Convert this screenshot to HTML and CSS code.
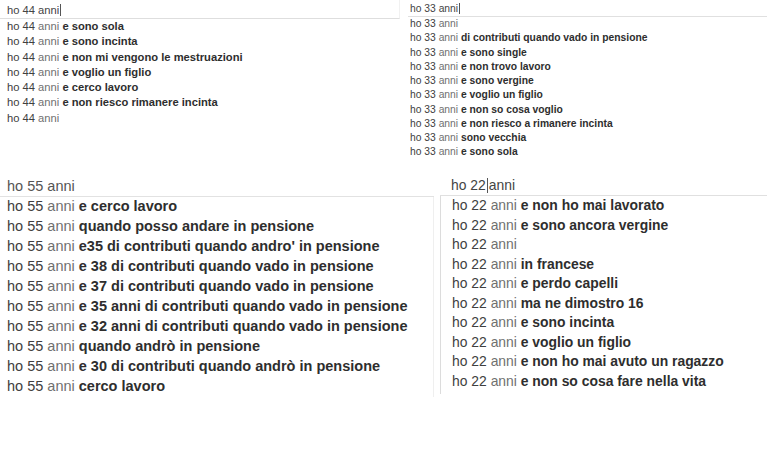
FILE: index.html
```html
<!DOCTYPE html>
<html lang="it">
<head>
<meta charset="utf-8">
<title>ho ... anni</title>
<link rel="stylesheet" href="styles.css">
</head>
<body>
<div class="page">
  <div class="row row-top">
    <section class="panel p1">
      <div class="input">ho 44 anni<span class="caret"></span></div>
      <ul class="list">
        <li><span class="q">ho 44 </span><span class="a">anni</span> <b>e sono sola</b></li>
        <li><span class="q">ho 44 </span><span class="a">anni</span> <b>e sono incinta</b></li>
        <li><span class="q">ho 44 </span><span class="a">anni</span> <b>e non mi vengono le mestruazioni</b></li>
        <li><span class="q">ho 44 </span><span class="a">anni</span> <b>e voglio un figlio</b></li>
        <li><span class="q">ho 44 </span><span class="a">anni</span> <b>e cerco lavoro</b></li>
        <li><span class="q">ho 44 </span><span class="a">anni</span> <b>e non riesco rimanere incinta</b></li>
        <li><span class="q">ho 44 </span><span class="a">anni</span></li>
      </ul>
    </section>
    <section class="panel p2">
      <div class="input">ho 33 anni<span class="caret"></span></div>
      <ul class="list">
        <li><span class="q">ho 33 </span><span class="a">anni</span></li>
        <li><span class="q">ho 33 </span><span class="a">anni</span> <b>di contributi quando vado in pensione</b></li>
        <li><span class="q">ho 33 </span><span class="a">anni</span> <b>e sono single</b></li>
        <li><span class="q">ho 33 </span><span class="a">anni</span> <b>e non trovo lavoro</b></li>
        <li><span class="q">ho 33 </span><span class="a">anni</span> <b>e sono vergine</b></li>
        <li><span class="q">ho 33 </span><span class="a">anni</span> <b>e voglio un figlio</b></li>
        <li><span class="q">ho 33 </span><span class="a">anni</span> <b>e non so cosa voglio</b></li>
        <li><span class="q">ho 33 </span><span class="a">anni</span> <b>e non riesco a rimanere incinta</b></li>
        <li><span class="q">ho 33 </span><span class="a">anni</span> <b>sono vecchia</b></li>
        <li><span class="q">ho 33 </span><span class="a">anni</span> <b>e sono sola</b></li>
      </ul>
    </section>
  </div>
  <div class="row row-bottom">
    <section class="panel p3">
      <div class="input">ho 55 anni</div>
      <ul class="list">
        <li><span class="q">ho 55 </span><span class="a">anni</span> <b>e cerco lavoro</b></li>
        <li><span class="q">ho 55 </span><span class="a">anni</span> <b>quando posso andare in pensione</b></li>
        <li><span class="q">ho 55 </span><span class="a">anni</span> <b>e35 di contributi quando andro' in pensione</b></li>
        <li><span class="q">ho 55 </span><span class="a">anni</span> <b>e 38 di contributi quando vado in pensione</b></li>
        <li><span class="q">ho 55 </span><span class="a">anni</span> <b>e 37 di contributi quando vado in pensione</b></li>
        <li><span class="q">ho 55 </span><span class="a">anni</span> <b>e 35 anni di contributi quando vado in pensione</b></li>
        <li><span class="q">ho 55 </span><span class="a">anni</span> <b>e 32 anni di contributi quando vado in pensione</b></li>
        <li><span class="q">ho 55 </span><span class="a">anni</span> <b>quando andrò in pensione</b></li>
        <li><span class="q">ho 55 </span><span class="a">anni</span> <b>e 30 di contributi quando andrò in pensione</b></li>
        <li><span class="q">ho 55 </span><span class="a">anni</span> <b>cerco lavoro</b></li>
      </ul>
    </section>
    <section class="panel p4">
      <div class="input">ho 22<span class="caret"></span>anni</div>
      <ul class="list">
        <li><span class="q">ho 22 </span><span class="a">anni</span> <b>e non ho mai lavorato</b></li>
        <li><span class="q">ho 22 </span><span class="a">anni</span> <b>e sono ancora vergine</b></li>
        <li><span class="q">ho 22 </span><span class="a">anni</span></li>
        <li><span class="q">ho 22 </span><span class="a">anni</span> <b>in francese</b></li>
        <li><span class="q">ho 22 </span><span class="a">anni</span> <b>e perdo capelli</b></li>
        <li><span class="q">ho 22 </span><span class="a">anni</span> <b>ma ne dimostro 16</b></li>
        <li><span class="q">ho 22 </span><span class="a">anni</span> <b>e sono incinta</b></li>
        <li><span class="q">ho 22 </span><span class="a">anni</span> <b>e voglio un figlio</b></li>
        <li><span class="q">ho 22 </span><span class="a">anni</span> <b>e non ho mai avuto un ragazzo</b></li>
        <li><span class="q">ho 22 </span><span class="a">anni</span> <b>e non so cosa fare nella vita</b></li>
      </ul>
    </section>
  </div>
</div>
</body>
</html>
```
FILE: styles.css
```css
* { box-sizing: border-box; }
html, body { margin: 0; padding: 0; background: #fff; }
body {
  width: 767px;
  height: 452px;
  overflow: hidden;
  font-family: "Liberation Sans", Arial, sans-serif;
  color: #333;
}
.page { display: flex; flex-direction: column; }
.row { display: flex; }
.row-top { height: 165px; }
.row-bottom { height: 287px; }

.list { list-style: none; margin: 0; padding: 0; }
.list li { white-space: nowrap; }
.q { color: #404040; }
.a { color: #707070; }
.list b { color: #2e2e2e; font-weight: bold; }
.input { white-space: nowrap; color: #444; }
.caret {
  display: inline-block;
  width: 0;
  height: 1.05em;
  border-left: 1px solid #555;
  vertical-align: -0.2em;
  margin-left: 1px;
}

/* panel 1 */
.p1 { width: 400px; font-size: 11.2px; }
.p1 .input {
  height: 19px;
  padding: 3px 0 0 7px;
  line-height: 15px;
  border-bottom: 1px solid #dedede;
  border-right: 1px solid #f1f1f1;
}
.p1 .list { padding-left: 7px; }
.p1 .list li { line-height: 15.27px; }

/* panel 2 */
.p2 { flex: 1; font-size: 10.3px; }
.p2 .input {
  height: 17px;
  padding: 2px 0 0 2px;
  line-height: 14px;
  border-bottom: 1px solid #e0e0e0;
  margin-left: 8px;
}
.p2 .list { padding-left: 10px; }
.p2 .list li { line-height: 14.27px; }

/* panel 3 */
.p3 { width: 434px; font-size: 14.5px; }
.p3 .input {
  height: 32px;
  padding: 12px 0 0 7px;
  line-height: 18px;
  color: #555;
  border-bottom: 1px solid #e2e2e2;
}
.p3 .list {
  padding-left: 7px;
  border-right: 1px solid #efefef;
}
.p3 .list li { line-height: 19.96px; }

/* panel 4 */
.p4 { flex: 1; margin-left: 6px; font-size: 13.9px; }
.p4 .input {
  height: 31px;
  padding: 12px 0 0 11px;
  line-height: 17px;
  border-bottom: 1px solid #e0e0e0;
}
.p4 .input .caret { margin: 0 1px 0 1px; }
.p4 .list {
  padding-left: 11px;
  padding-bottom: 3px;
  border-left: 1px solid #dcdcdc;
}
.p4 .list li { line-height: 19.5px; }
```
